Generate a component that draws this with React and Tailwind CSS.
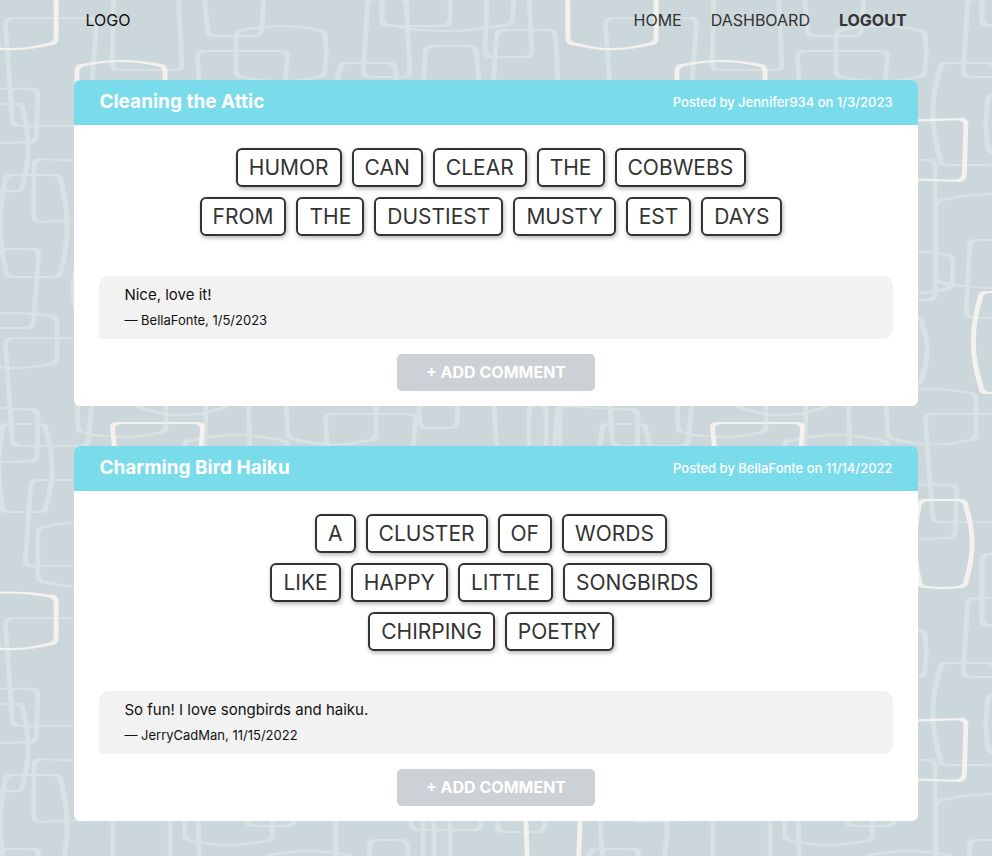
import React from "react";

// Each loop: corners (tl, tr, br, bl) followed by how far each side bows outward (top, right, bottom, left).
const PALE = [
  [5, 18, 97, 18, 88, 126, 13, 126, 0, 0, 0, 0],
  [116, -90, 174, -90, 182, 70, 112, 70, 0, 0, 0, 0],
  [200, -60, 268, -60, 261, 36, 208, 36, 0, 0, 0, 0],
  [236, 30, 325, 30, 325, 77, 236, 77, 4, 1, 4, 0],
  [197, 51, 288, 51, 280, 130, 203, 130, 0, 0, 0, 0],
  [368, -2, 406, -2, 410, 77, 363, 77, 0, 0, 0, 0],
  [382, -46, 517, -46, 512, 25, 382, 25, 0, 0, 6, 0],
  [340, 63, 395, 63, 398, 165, 340, 165, 0, 3, 0, 7],
  [426, 46, 476, 46, 482, 120, 421, 120, 0, 0, 0, 0],
  [489, -60, 526, -60, 532, 57, 485, 57, 0, 0, 0, 0],
  [497, 30, 555, 30, 560, 120, 491, 120, 0, 0, 0, 0],
  [-50, 88, 38, 89, 36, 142, -50, 144, 0, 0, 0, 0],
  [-40, 103, 23, 104, 23, 191, -40, 192, 0, 5, 0, 0],
  [34, 159, 120, 162, 120, 219, 34, 222, 0, 0, 0, 0],
  [5, 175, 61, 175, 61, 277, 6, 277, 0, 6, 0, 5],
  [-10, 249, 39, 249, 33, 328, -14, 328, 0, 0, 0, 0],
  [-32, 316, 57, 316, 57, 364, -32, 364, 3, 0, 4, 0],
  [5, 338, 97, 338, 88, 446, 13, 446, 0, 0, 0, 0],
  [-42, 406, 38, 410, 37, 461, -47, 464, 0, 0, 0, 0],
  [2, 424, 46, 424, 46, 512, 2, 512, 0, 6, 0, 3],
  [31, 480, 120, 480, 112, 566, 25, 566, 0, 0, 0, 0],
  [38, 527, 130, 527, 130, 582, 38, 582, 5, 0, 5, 0],
  [77, 260, 150, 260, 150, 318, 77, 318, 0, 0, 0, 4],
  [77, 370, 166, 370, 166, 433, 78, 433, 0, 0, 4, 0],
  [138, 350, 227, 350, 226, 409, 138, 409, 0, 0, 6, 0],
  [208, 350, 246, 350, 252, 500, 203, 500, 0, 0, 0, 0],
  [286, 393, 376, 393, 376, 440, 288, 439, 4, 0, 5, 0],
  [325, 414, 416, 414, 406, 522, 333, 522, 0, 0, 0, 0],
  [417, 350, 458, 350, 457, 428, 420, 428, 0, 0, 0, 0],
  [185, 440, 287, 440, 287, 500, 185, 500, 5, 0, 0, 0],
  [493, 360, 560, 360, 560, 500, 502, 500, 0, 0, 0, 2],
  [529, 405, 546, 405, 546, 500, 529, 500, 1, 0, 0, 0],
  [388, 94, 450, 94, 450, 153, 388, 153, 0, 0, 0, 2],
  [336, 200, 450, 200, 450, 283, 336, 283, 6, 0, 5, 0],
  [265, 255, 353, 255, 352, 289, 265, 290, 4, 0, 4, 0],
  [370, 240, 407, 240, 412, 318, 366, 318, 0, 0, 0, 0],
  [270, 317, 322, 317, 322, 384, 270, 384, 0, 5, 0, 0],
  [270, 484, 357, 485, 355, 538, 270, 540, 0, 0, 0, 0],
  [382, 554, 450, 554, 450, 626, 382, 626, 0, 0, 0, 0],
  [114, 160, 170, 160, 170, 300, 112, 300, 0, 0, 0, 0],
  [184, 180, 272, 180, 272, 241, 185, 241, 0, 0, 4, 0],
  [196, 160, 335, 160, 335, 300, 201, 300, 0, 0, 0, 0],
  [247, 170, 295, 170, 294, 226, 247, 226, 0, 0, 0, 0],
  [411, 170, 482, 170, 481, 230, 411, 230, 0, 0, 0, 0],
  [423, 170, 434, 170, 434, 310, 423, 310, 0, 0, 0, 0],
  [495, 170, 548, 170, 544, 232, 498, 232, 0, 0, 0, 0],
];

const CREAM = [
  [-32, -5, 56, -4, 56, 44, -32, 44, 3, 0, 5, 0],
  [77, 65, 165, 65, 165, 115, 77, 115, 4, 0, 0, 0],
  [112, 423, 203, 423, 196, 500, 120, 500, 0, 0, 0, 0],
  [270, 122, 366, 119, 364, 181, 270, 178, 0, 0, 0, 0],
  [380, 292, 470, 292, 470, 393, 381, 393, 0, 0, 0, 7],
  [319, 500, 366, 500, 366, 587, 319, 587, 0, 6, 1, 4],
  [524, 170, 582, 170, 577, 300, 529, 300, 0, 0, 0, 0],
];

function ring(s, dx, dy, r) {
  const [ax, ay, bx, by, cx, cy, ex, ey, t, ri, b, l] = s;
  const p = [[ax - dx, ay - dy], [bx + dx, by - dy], [cx + dx, cy + dy], [ex - dx, ey + dy]];
  const bow = [[0, -t], [ri, 0], [0, b], [-l, 0]];
  let d = "";
  for (let i = 0; i < 4; i++) {
    const from = p[i];
    const to = p[(i + 1) % 4];
    const next = p[(i + 2) % 4];
    const len = Math.hypot(to[0] - from[0], to[1] - from[1]);
    const len2 = Math.hypot(next[0] - to[0], next[1] - to[1]);
    const k = Math.min(r / len, 0.5);
    const k2 = Math.min(r / len2, 0.5);
    const sx = from[0] + (to[0] - from[0]) * k;
    const sy = from[1] + (to[1] - from[1]) * k;
    const tx = to[0] - (to[0] - from[0]) * k;
    const ty = to[1] - (to[1] - from[1]) * k;
    const mx = (sx + tx) / 2 + bow[i][0] * 2;
    const my = (sy + ty) / 2 + bow[i][1] * 2;
    if (i === 0) d += `M${sx} ${sy}`;
    d += `Q${mx} ${my} ${tx} ${ty}`;
    d += `Q${to[0]} ${to[1]} ${to[0] + (next[0] - to[0]) * k2} ${to[1] + (next[1] - to[1]) * k2}`;
  }
  return d + "Z";
}

const loop = (s) => ring(s, 2.5, 1.1, 7) + ring(s, -2.3, -1, 7);

function Backdrop() {
  return (
    <svg className="absolute inset-0 h-full w-full" aria-hidden="true">
      <defs>
        <g id="loops" fillRule="evenodd">
          {PALE.map((s, i) => <path key={i} d={loop(s)} fill="#d8e2e4" />)}
          {CREAM.map((s, i) => <path key={i} d={loop(s)} fill="#f4f2ee" />)}
        </g>
        <pattern id="retro" width="600" height="600" patternUnits="userSpaceOnUse">
          <use href="#loops" />
          <use href="#loops" x="600" />
          <use href="#loops" y="600" />
          <use href="#loops" x="600" y="600" />
          <use href="#loops" y="-600" />
        </pattern>
      </defs>
      <rect width="100%" height="100%" fill="url(#retro)" />
    </svg>
  );
}

const POEMS = [
  {
    title: "Cleaning the Attic",
    posted: "Posted by Jennifer934 on 1/3/2023",
    lines: [
      ["HUMOR", "CAN", "CLEAR", "THE", "COBWEBS"],
      ["FROM", "THE", "DUSTIEST", "MUSTY", "EST", "DAYS"],
    ],
    comment: "Nice, love it!",
    by: "— BellaFonte, 1/5/2023",
  },
  {
    title: "Charming Bird Haiku",
    posted: "Posted by BellaFonte on 11/14/2022",
    lines: [
      ["A", "CLUSTER", "OF", "WORDS"],
      ["LIKE", "HAPPY", "LITTLE", "SONGBIRDS"],
      ["CHIRPING", "POETRY"],
    ],
    comment: "So fun! I love songbirds and haiku.",
    by: "— JerryCadMan, 11/15/2022",
  },
];

function Poem({ poem }) {
  return (
    <article className="overflow-hidden rounded-md bg-white">
      <header className="flex h-[45px] items-center justify-between bg-[#7adbeb] px-[25px] text-white">
        <h2 className="text-[19px] font-bold">{poem.title}</h2>
        <p className="text-[13px] font-medium">{poem.posted}</p>
      </header>
      <div className="flex flex-col gap-[10px] pt-[23px] pb-10">
        {poem.lines.map((line, i) => (
          <div key={i} className="flex justify-center">
            {line.map((word) => (
              <span
                key={word}
                className="mr-[10px] flex h-[39px] items-center rounded-md border-2 border-[#333333] bg-white px-[11px] text-[21px] text-[#333333] shadow-[1px_2px_4px_rgba(0,0,0,0.3)]"
              >
                {word}
              </span>
            ))}
          </div>
        ))}
      </div>
      <div className="mx-[25px] h-[63px] rounded-[10px] rounded-bl-none bg-[#f2f2f2] px-[25px] pt-[7px] text-[#111111]">
        <p className="text-[15px] leading-6">{poem.comment}</p>
        <p className="text-[13px] leading-[26px]">{poem.by}</p>
      </div>
      <div className="flex justify-center py-[15px]">
        <button type="button" className="h-[37px] w-[198px] rounded-[5px] bg-[#cbd1d4] pb-0.5 text-base font-bold text-white">
          + ADD COMMENT
        </button>
      </div>
    </article>
  );
}

export default function App() {
  return (
    <div className="relative min-h-screen bg-[#ccd7db] font-['Inter','Liberation_Sans',sans-serif]">
      <Backdrop />
      <div className="relative mx-auto w-[85%] pb-8">
        <nav className="flex h-10 items-center justify-between px-[11px] text-base text-[#333333]">
          <a href="#" className="text-[#111111]">LOGO</a>
          <div className="flex gap-[29px]">
            <a href="#">HOME</a>
            <a href="#">DASHBOARD</a>
            <a href="#" className="font-bold">LOGOUT</a>
          </div>
        </nav>
        <main className="flex flex-col gap-10 pt-10">
          {POEMS.map((poem) => <Poem key={poem.title} poem={poem} />)}
        </main>
      </div>
    </div>
  );
}
